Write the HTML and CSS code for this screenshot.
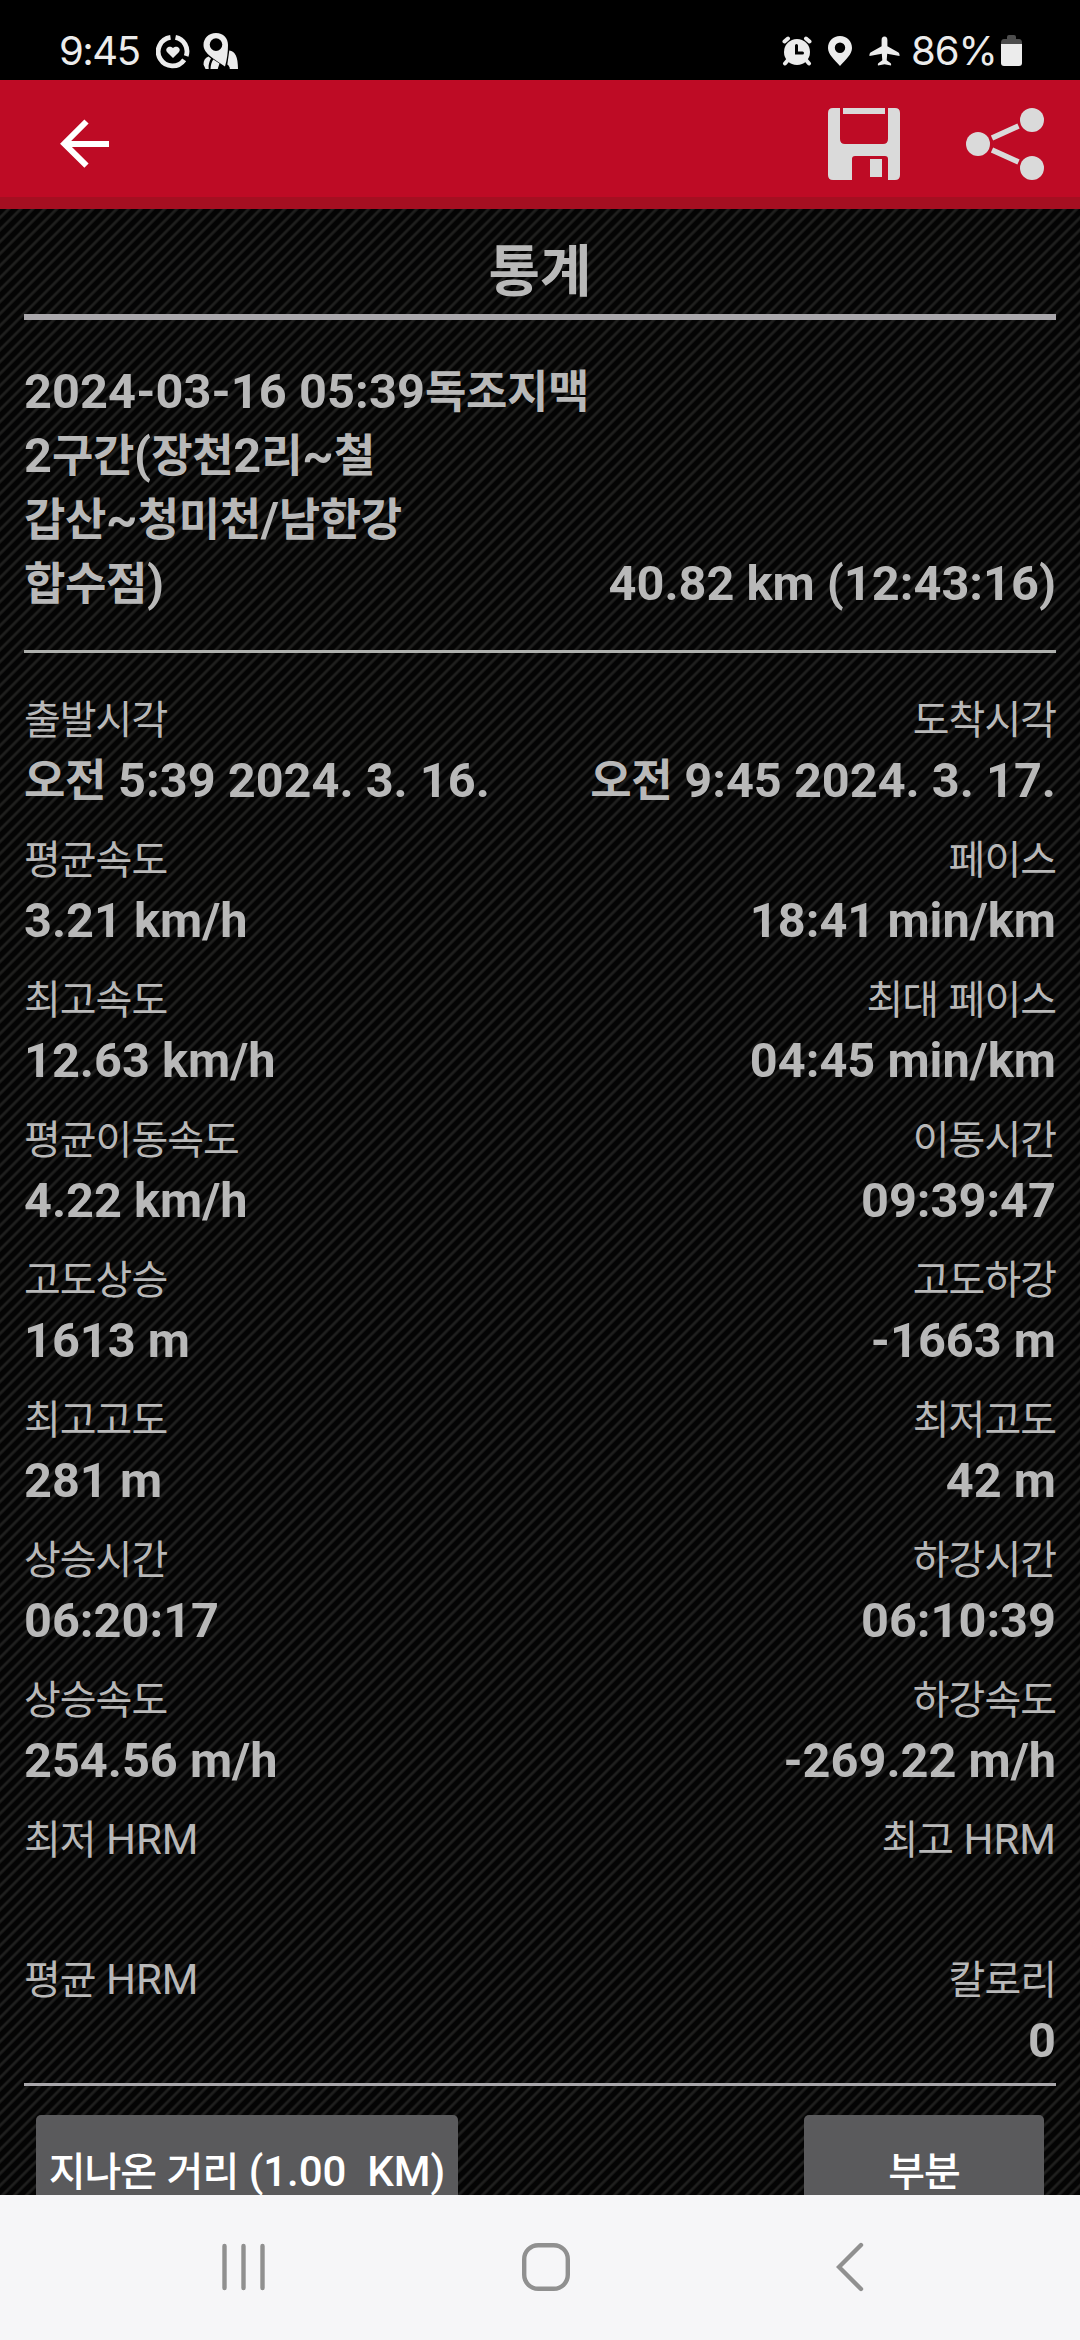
FILE: index.html
```html
<!DOCTYPE html>
<html lang="ko">
<head>
<meta charset="utf-8">
<title>통계</title>
<link rel="stylesheet" href="styles.css">
</head>
<body>
<div class="screen">
  <header class="status">
    <span class="clock">9:45</span>
    <svg class="st-health" width="34" height="36" viewBox="0 0 34 36"><g fill="none" stroke="#ececec" stroke-width="4.800"><path d="M19.500 4.400A14.300 14.300 0 0 1 30.200 23"/><path d="M28.200 26.800A14.300 14.300 0 1 1 14.500 4.400"/></g><path fill="#ececec" d="M17 25l-5.800-5.800c-3.200-4 2.500-7.600 5.800-4.100 3.300-3.500 9 .1 5.800 4.100z"/></svg>
    <svg class="st-map" width="36" height="38" viewBox="0 0 36 38"><path fill="#ececec" fill-rule="evenodd" d="M13 0C5.500 0 .5 5.500.5 12c0 9 12 14.500 21.500 21.500 2-7 3-14.500 3-21.500C25 5 20.500 0 13 0zm0 5.300a6.300 6.300 0 1 1 0 12.600A6.300 6.300 0 0 1 13 5.300z"/><path fill="#ececec" d="M26.300 17.500c6 1 8.700 6 8.700 18.500h-8.200c0-2-1-3.500-2.500-4.500zM5.500 23.500C2 25 .5 27.500.5 31.500L2.500 36h3.200c-.5-4 .6-7.500 2.300-10.500zM10.300 26.500c-1.800 2.500-2.600 5.500-2.800 9.500h7.200l1.800-5.500z"/></svg>
    <span class="spacer"></span>
    <svg class="st-alarm" width="30" height="30" viewBox="0 0 30 30"><circle cx="15" cy="16" r="13" fill="#ececec"/><g stroke="#ececec" stroke-width="4" stroke-linecap="round"><path d="M2.500 5.500l3.500-3M27.500 5.500l-3.500-3M6 24l-3 3.500M24 24l3 3.500"/></g><path d="M14.500 9.500v7.500h6" fill="none" stroke="#000" stroke-width="3" stroke-linecap="round"/></svg>
    <svg class="st-pin" width="24" height="30" viewBox="0 0 24 30"><path fill="#ececec" fill-rule="evenodd" d="M12 0C5 0 0 5 0 12c0 6.500 6 11 12 18 6-7 12-11.500 12-18C24 5 19 0 12 0zm0 6.500a5.200 5.200 0 1 1 0 10.400 5.200 5.200 0 0 1 0-10.400z"/></svg>
    <svg class="st-plane" width="31" height="30" viewBox="0 0 31 30"><path fill="#ececec" d="M15.500.5c-2 0-2.900 1.500-2.900 3.500v6.200L1.500 16.500C.5 17.200.3 19 .5 20l12.300-2.300.5 6.500-4 3c-.5.500-.5 1.700-.3 2.300l6.500-1.300 6.500 1.300c.2-.6.200-1.800-.3-2.300l-4-3 .5-6.500L30.500 20c.2-1 0-2.800-1-3.500l-11.100-6.300V4c0-2-.9-3.500-2.900-3.500z"/></svg>
    <span class="pct">86%</span>
    <svg class="st-bat" width="21" height="31" viewBox="0 0 21 31"><path fill="#4d4d4d" d="M6 2q0-2 2-2h5q2 0 2 2v2h3q3 0 3 4v1H0V8q0-4 3-4h3z"/><path fill="#ececec" d="M0 9h21v19q0 3-3 3H3q-3 0-3-3z"/></svg>
  </header>
  <nav class="appbar">
    <svg width="50" height="50" viewBox="0 0 50 50"><path fill="none" stroke="#fff" stroke-width="6" d="M49 25H5M26.500 2.500L4.300 24.700l22.200 22"/></svg>
    <span class="spacer"></span>
    <svg width="72" height="72" viewBox="0 0 72 72" fill="#dadada"><path d="M5 0h7v31q0 5 5 5h38q5 0 5-5V0h7q5 0 5 5v62q0 5-5 5h-7V51q0-3-3-3H27q-3 0-3 3v21H5q-5 0-5-5V5q0-5 5-5z"/><path d="M15 0h42v6H15zM42 51h12v18H42z"/></svg>
    <svg class="share" width="78" height="72" viewBox="0 0 78 72" fill="#dadada"><circle cx="12" cy="36" r="12"/><circle cx="66" cy="12" r="12"/><circle cx="66" cy="60" r="12"/><path d="M26 30l26.500-12M26 42l26.500 12" stroke="#dadada" stroke-width="5.500"/></svg>
  </nav>
  <main class="content">
    <h1 class="title">통계</h1>
    <section class="summary">
      <p class="name">2024-03-16 05:39<b>독조지맥</b><br>2<b>구간</b>(<b>장천</b>2<b>리</b>~<b>철</b><br><b>갑산</b>~<b>청미천</b>/<b>남한강</b><br><b>합수점</b>)</p>
      <p class="total">40.82 km (12:43:16)</p>
    </section>
    <dl class="stats">
      <div><dt><i>출발시각</i></dt><dd><b>오전</b> 5:39 2024. 3. 16.</dd></div><div><dt><i>도착시각</i></dt><dd><b>오전</b> 9:45 2024. 3. 17.</dd></div>
      <div><dt><i>평균속도</i></dt><dd>3.21 km/h</dd></div><div><dt><i>페이스</i></dt><dd>18:41 min/km</dd></div>
      <div><dt><i>최고속도</i></dt><dd>12.63 km/h</dd></div><div><dt><i>최대</i> <i>페이스</i></dt><dd>04:45 min/km</dd></div>
      <div><dt><i>평균이동속도</i></dt><dd>4.22 km/h</dd></div><div><dt><i>이동시간</i></dt><dd>09:39:47</dd></div>
      <div><dt><i>고도상승</i></dt><dd>1613 m</dd></div><div><dt><i>고도하강</i></dt><dd>-1663 m</dd></div>
      <div><dt><i>최고고도</i></dt><dd>281 m</dd></div><div><dt><i>최저고도</i></dt><dd>42 m</dd></div>
      <div><dt><i>상승시간</i></dt><dd>06:20:17</dd></div><div><dt><i>하강시간</i></dt><dd>06:10:39</dd></div>
      <div><dt><i>상승속도</i></dt><dd>254.56 m/h</dd></div><div><dt><i>하강속도</i></dt><dd>-269.22 m/h</dd></div>
      <div><dt><i>최저</i> HRM</dt><dd></dd></div><div><dt><i>최고</i> HRM</dt><dd></dd></div>
      <div><dt><i>평균</i> HRM</dt><dd></dd></div><div><dt><i>칼로리</i></dt><dd>0</dd></div>
    </dl>
    <div class="actions">
      <button class="btn wide"><i>지나온</i> <i>거리</i> (1.00&nbsp; KM)</button>
      <button class="btn"><i>부분</i></button>
    </div>
  </main>
  <footer class="navbar">
    <svg width="43" height="48" viewBox="0 0 43 48"><path d="M2.500 3v42M21.500 3v42M40.500 3v42" stroke="#909090" stroke-width="4.400" stroke-linecap="round"/></svg>
    <svg class="home" width="48" height="48" viewBox="0 0 48 48"><rect x="2.200" y="2.200" width="43.600" height="43.600" rx="14" fill="none" stroke="#909090" stroke-width="4.400"/></svg>
    <svg width="28" height="50" viewBox="0 0 28 50"><path d="M25 3L3 25l22 22" fill="none" stroke="#909090" stroke-width="4.400" stroke-linecap="round"/></svg>
  </footer>
</div>
</body>
</html>
```
FILE: styles.css
```css
* { box-sizing: border-box; margin: 0; padding: 0; }
body { background: #000; font-family: Roboto, "Noto Sans CJK KR", sans-serif; }
svg { display: block; flex: none; }
.screen { width: 1080px; height: 2340px; display: flex; flex-direction: column; overflow: hidden; }
.spacer { flex: 1; }

.status { height: 80px; flex: none; display: flex; align-items: flex-start; padding: 33px 58px 0 59px; color: #ececec; font-family: Inter, Roboto, sans-serif; font-size: 40px; line-height: 36px; }
.clock { width: 97px; letter-spacing: -1.5px; white-space: nowrap; }
.st-map { margin-left: 13px; }
.st-alarm { margin: 3px 16px 0 0; }
.st-pin { margin: 3px 17px 0 0; }
.st-plane { margin: 3px 11px 0 0; }
.pct { width: 90px; letter-spacing: -1px; }
.st-bat { margin-top: 2px; }

.appbar { height: 129px; flex: none; display: flex; align-items: flex-start; padding: 28px 36px 0 60px; background: #be0b25; border-bottom: 12px solid #a50f21; }
.appbar svg:first-child { margin-top: 11px; }
.appbar .share { margin-left: 66px; }

.content { height: 1986px; flex: none; overflow: hidden; padding: 0 24px; color: #b8b8b8; background: repeating-linear-gradient(135deg, #040404 0, #040404 3.985px, #1f1f1e 5.485px, #1f1f1e 6.685px, #040404 8.485px); }
.title { height: 111px; border-bottom: 6px solid #a9a7ab; text-align: center; font-size: 56px; line-height: 126px; font-weight: 700; }
.summary { height: 333px; display: flex; justify-content: space-between; align-items: flex-end; padding-bottom: 34px; border-bottom: 3px solid #aeb0ad; font-size: 48.7px; line-height: 64px; font-weight: 700; }
.summary p { white-space: nowrap; }
.summary .name { letter-spacing: 0.1px; }
.summary b, .stats b { font: 700 45px/1 "Noto Sans CJK KR", sans-serif; letter-spacing: -0.4px; }
.stats { height: 1433px; padding-top: 34px; border-bottom: 3px solid #a9a7ab; display: grid; grid-template-columns: 1fr 1fr; grid-auto-rows: 140px; }
.stats div:nth-child(even) { text-align: right; }
.stats dt { height: 63px; font-size: 42px; line-height: 66px; }
.stats dd { height: 62px; font-size: 48.7px; line-height: 62px; font-weight: 700; white-space: nowrap; }
i { font-style: normal; font-family: "Noto Sans CJK KR", sans-serif; font-size: 40px; line-height: 1; letter-spacing: -1px; }
.actions { display: flex; justify-content: space-between; padding: 29px 12px 0; }
.btn { width: 240px; height: 114px; border: 0; border-radius: 5px; background: #5a5a5c; color: #fff; font: 500 42px/50px Roboto, "Noto Sans CJK KR", sans-serif; white-space: nowrap; }
.btn.wide { width: 422px; }

.navbar { flex: 1; background: #f6f6f8; display: flex; align-items: center; padding: 0 216px 1px 222px; }
.navbar .home { margin: 0 266px 0 257px; }
```
